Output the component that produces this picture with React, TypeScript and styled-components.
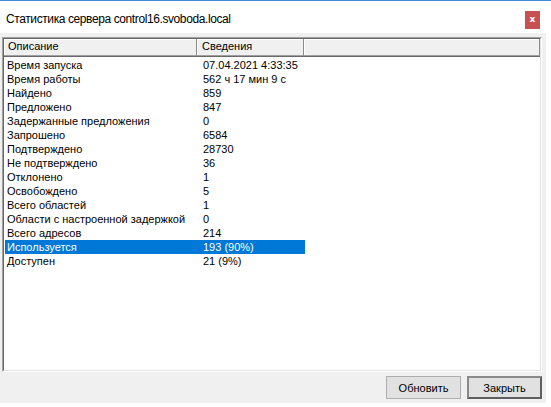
import React from "react";
import styled, { createGlobalStyle } from "styled-components";

const GlobalStyle = createGlobalStyle`
  html, body { margin: 0; padding: 0; background: #ffffff; }
  body { font-family: "Liberation Sans", Arial, sans-serif; }
`;

const Page = styled.div`
  width: 551px;
  height: 407px;
  border-top: 1px solid #3f8bd6;
  box-sizing: border-box;
  background: #ffffff;
`;

const Window = styled.div`
  width: 546px;
  display: flex;
  flex-direction: column;
`;

const TitleBar = styled.div`
  height: 32px;
  display: flex;
  align-items: flex-start;
  justify-content: space-between;
  background: #ffffff;
`;

const Title = styled.div`
  font-family: "Liberation Sans", Arial, sans-serif;
  font-size: 12px;
  letter-spacing: -0.4px;
  line-height: 16px;
  color: #000;
  padding: 10px 0 0 6px;
`;

const CloseButton = styled.div`
  width: 15px;
  height: 18px;
  margin: 10px 6px 0 0;
  background: #c75050;
  color: #fff;
  font-family: "DejaVu Sans", sans-serif;
  font-weight: bold;
  font-size: 9px;
  line-height: 17px;
  text-align: center;
`;

const Client = styled.div`
  height: 370px;
  box-sizing: border-box;
  background: #f0f0f0;
  padding: 4px 4px 0 2px;
  display: flex;
  flex-direction: column;
`;

const ListOuter = styled.div`
  height: 335px;
  box-sizing: border-box;
  border-style: solid;
  border-width: 1px;
  border-color: #a0a0a0 #ffffff #ffffff #a0a0a0;
  display: flex;
`;

const ListInner = styled.div`
  flex: 1;
  box-sizing: border-box;
  border-style: solid;
  border-width: 1px;
  border-color: #696969 #e3e3e3 #e3e3e3 #696969;
  background: #ffffff;
  display: flex;
  flex-direction: column;
  font-family: "Liberation Sans", Arial, sans-serif;
  font-size: 11px;
  line-height: 14px;
  color: #000;
`;

const Header = styled.div`
  display: flex;
  height: 18px;
  box-sizing: border-box;
  border-bottom: 1px solid #696969;
  background: #f0f0f0;
`;

const HeaderCell = styled.div<{ $w?: number }>`
  ${(p) => (p.$w ? `width: ${p.$w}px;` : "flex: 1;")}
  box-sizing: border-box;
  height: 17px;
  padding-left: ${(p) => (p.$w === 193 ? 4 : 5)}px;
  border-right: 1px solid #8a8a8a;
  border-bottom: 1px solid #a0a0a0;
  box-shadow: inset 1px 1px 0 #ffffff;
  white-space: nowrap;
  overflow: hidden;
`;

const Rows = styled.div`
  padding: 1px 0 0 1px;
  display: flex;
  flex-direction: column;
`;

const Row = styled.div<{ $selected?: boolean }>`
  display: grid;
  grid-template-columns: 192px 108px;
  height: 14px;
  background: ${(p) => (p.$selected ? "#0078d7" : "transparent")};
  color: ${(p) => (p.$selected ? "#ffffff" : "#000000")};
  width: 300px;
`;

const Cell = styled.div<{ $pad: number }>`
  padding-left: ${(p) => p.$pad}px;
  white-space: nowrap;
  overflow: hidden;
`;

const Footer = styled.div`
  display: flex;
  justify-content: flex-end;
  gap: 6px;
  padding-top: 4px;
`;

const Button = styled.button<{ $default?: boolean }>`
  width: 75px;
  height: 23px;
  box-sizing: border-box;
  margin: 0;
  padding: 0;
  background: #e1e1e1;
  font-family: "Liberation Sans", Arial, sans-serif;
  font-size: 11px;
  color: #000;
  border-style: solid;
  border-width: ${(p) => (p.$default ? "2px" : "1px")};
  border-color: ${(p) =>
    p.$default ? "#8a8a8a #5f5f5f #5f5f5f #8a8a8a" : "#adadad"};
`;

const rows: [string, string][] = [
  ["Время запуска", "07.04.2021 4:33:35"],
  ["Время работы", "562 ч 17 мин 9 с"],
  ["Найдено", "859"],
  ["Предложено", "847"],
  ["Задержанные предложения", "0"],
  ["Запрошено", "6584"],
  ["Подтверждено", "28730"],
  ["Не подтверждено", "36"],
  ["Отклонено", "1"],
  ["Освобождено", "5"],
  ["Всего областей", "1"],
  ["Области с настроенной задержкой", "0"],
  ["Всего адресов", "214"],
  ["Используется", "193 (90%)"],
  ["Доступен", "21 (9%)"],
];

export default function App() {
  return (
    <>
      <GlobalStyle />
      <Page>
        <Window>
          <TitleBar>
            <Title>Статистика сервера control16.svoboda.local</Title>
            <CloseButton>x</CloseButton>
          </TitleBar>
          <Client>
            <ListOuter>
              <ListInner>
                <Header>
                  <HeaderCell $w={193}>Описание</HeaderCell>
                  <HeaderCell $w={107}>Сведения</HeaderCell>
                  <HeaderCell />
                </Header>
                <Rows>
                  {rows.map(([k, v], i) => (
                    <Row key={k} $selected={i === 13}>
                      <Cell $pad={2}>{k}</Cell>
                      <Cell $pad={6}>{v}</Cell>
                    </Row>
                  ))}
                </Rows>
              </ListInner>
            </ListOuter>
            <Footer>
              <Button>Обновить</Button>
              <Button $default>Закрыть</Button>
            </Footer>
          </Client>
        </Window>
      </Page>
    </>
  );
}
